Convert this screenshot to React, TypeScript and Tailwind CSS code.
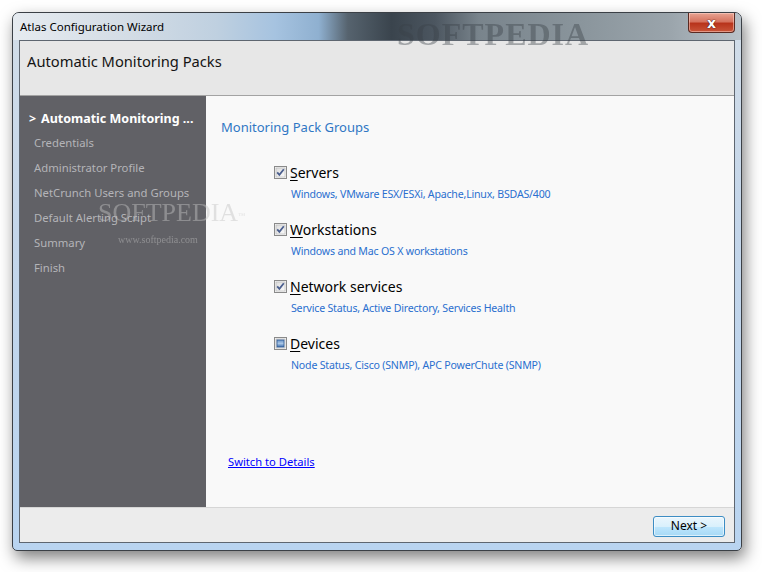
import React from 'react'

const font = { fontFamily: '"Noto Sans", "Open Sans", sans-serif' }

const groups = [
  { key: 'S', rest: 'ervers', desc: 'Windows, VMware ESX/ESXi, Apache,Linux, BSDAS/400', state: 'checked' },
  { key: 'W', rest: 'orkstations', desc: 'Windows and Mac OS X workstations', state: 'checked' },
  { key: 'N', rest: 'etwork services', desc: 'Service Status, Active Directory, Services Health', state: 'checked' },
  { key: 'D', rest: 'evices', desc: 'Node Status, Cisco (SNMP), APC PowerChute (SNMP)', state: 'mixed' },
]

const steps = ['Credentials', 'Administrator Profile', 'NetCrunch Users and Groups', 'Default Alerting Script', 'Summary', 'Finish']

function CheckBox({ state }: { state: string }) {
  return (
    <svg width="13" height="13" viewBox="0 0 13 13" className="shrink-0">
      <defs>
        <linearGradient id="cbg" x1="0" y1="0" x2="1" y2="1">
          <stop offset="0" stopColor="#dcdcdc" />
          <stop offset="1" stopColor="#fbfbfb" />
        </linearGradient>
        <linearGradient id="mix" x1="0" y1="0" x2="0" y2="1">
          <stop offset="0" stopColor="#6a94c8" />
          <stop offset="0.5" stopColor="#a9c6e6" />
          <stop offset="1" stopColor="#3f6fae" />
        </linearGradient>
      </defs>
      <rect x="0.5" y="0.5" width="12" height="12" fill="#f4f4f4" stroke="#8a8a8a" />
      <rect x="2" y="2" width="9" height="9" fill="url(#cbg)" stroke="#b4b4b4" strokeWidth="0.6" />
      {state === 'checked' ? (
        <path d="M3.2 6.3 L5.4 8.8 L9.8 3.2" fill="none" stroke="#4b5f8e" strokeWidth="1.8" />
      ) : (
        <rect x="3" y="3" width="7" height="7" fill="url(#mix)" stroke="#2f5b94" strokeWidth="0.8" />
      )}
    </svg>
  )
}

export default function App() {
  return (
    <div className="w-[762px] h-[572px] bg-white pl-[12px] pt-[12px] overflow-hidden" style={font}>
      <div className="relative w-[730px] h-[539px] flex flex-col rounded-t-[7px] rounded-b-[5px] border border-[#3b4046] bg-[linear-gradient(180deg,#d2dde8_0%,#c4d6ea_40%,#b9d4f0_100%)] shadow-[3px_7px_16px_rgba(0,0,0,0.5)] overflow-hidden">
        {/* title bar */}
        <div className="relative h-[27px] flex items-start shrink-0 bg-[linear-gradient(90deg,#e6ebf0_0%,#d3dce5_16%,#bfd0e0_28%,#a6c3e0_36%,#8fb0d0_42%,#56636e_46%,#3a444d_52%,#4c5660_58%,#79848c_64%,#8a959c_78%,#9aa4ab_90%,#b9c2c9_100%)]">
          <span className="absolute left-[384px] top-[-3px] text-[32px] font-bold tracking-[1px] text-[#3a4148] opacity-40 blur-[0.6px] select-none" style={{ fontFamily: '"Liberation Serif", serif' }}>SOFTPEDIA</span>
          <span className="relative pl-[7px] pt-[7px] text-[11.5px] leading-[14px] text-black">Atlas Configuration Wizard</span>
          <div className="relative ml-auto mr-[6px] w-[47px] h-[20px] rounded-b-[4px] border border-[#5a2a22] border-t-0 bg-[linear-gradient(180deg,#e8a493_0%,#d6735f_45%,#b8341c_55%,#c9553a_100%)] flex items-center justify-center shadow-[inset_0_0_0_1px_rgba(255,220,210,0.5)]">
            <span className="text-[14px] font-bold leading-none text-white" style={{ fontFamily: '"DejaVu Sans", sans-serif', textShadow: '0 0 1px #3a0f08, 0 0 1px #3a0f08' }}>x</span>
          </div>
        </div>

        {/* client */}
        <div className="flex-1 mx-[6px] mb-[7px] flex flex-col border border-[#5e6670] bg-[#f9f9f9]">
          <div className="h-[55px] shrink-0 bg-[#e7e7e7] border-b border-[#a3a3a3] px-[7px] pt-[8px]">
            <span className="text-[14.7px] text-[#141414]">Automatic Monitoring Packs</span>
          </div>

          <div className="relative flex-1 flex">
            <div className="w-[186px] shrink-0 bg-[#616166] pt-[13px]">
              <div className="flex items-center pl-[9px] h-[20px] text-[12.5px] font-bold text-white">
                <span className="w-[12px]">&gt;</span>
                <span>Automatic Monitoring ...</span>
              </div>
              {steps.map((s) => (
                <div key={s} className="pl-[14px] h-[25px] pt-[6px] text-[11.3px] text-[#b4b4b8]">{s}</div>
              ))}
            </div>

            <div className="flex-1 flex flex-col pl-[15px] pt-[22px]">
              <div className="text-[13px] text-[#2f77c4]">Monitoring Pack Groups</div>
              <div className="pl-[53px] pt-[26px] flex flex-col gap-[21px]">
                {groups.map((g) => (
                  <div key={g.key} className="flex flex-col">
                    <div className="flex items-center gap-[3px] h-[18px]">
                      <CheckBox state={g.state} />
                      <span className="text-[14px] text-black leading-[18px]">
                        <span className="underline underline-offset-[2px]">{g.key}</span>
                        {g.rest}
                      </span>
                    </div>
                    <div className="pl-[17px] pt-[6px] text-[10.6px] leading-[12px] text-[#2a6fcf] tracking-[-0.2px]">{g.desc}</div>
                  </div>
                ))}
              </div>
              <div className="mt-auto mb-[35px] pl-[7px]">
                <span className="text-[11.2px] text-[#0000ff] underline">Switch to Details</span>
              </div>
            </div>

            <div className="absolute left-[78px] top-[104px] text-[26px] leading-none text-[#c4c4c4] opacity-45 select-none" style={{ fontFamily: '"Liberation Serif", serif' }}>
              SOFTPEDIA<sup className="text-[7px]">™</sup>
            </div>
            <div className="absolute left-[98px] top-[136px] text-[10px] text-[#c4c4c4] opacity-45 select-none" style={{ fontFamily: '"Liberation Serif", serif' }}>www.softpedia.com</div>
          </div>

          <div className="h-[35px] shrink-0 bg-[#ececec] border-t border-[#d6d6d6] flex items-center justify-end pr-[9px] pt-[2px]">
            <button className="w-[72px] h-[21px] rounded-[3px] border border-[#3c8dc4] bg-[linear-gradient(180deg,#eaf6fd_0%,#d9f0fc_50%,#bee6fd_51%,#a7d9f5_100%)] text-[12px] text-black leading-none shadow-[inset_0_0_0_1px_rgba(255,255,255,0.6)]">
              Next &gt;
            </button>
          </div>
        </div>
      </div>
    </div>
  )
}
